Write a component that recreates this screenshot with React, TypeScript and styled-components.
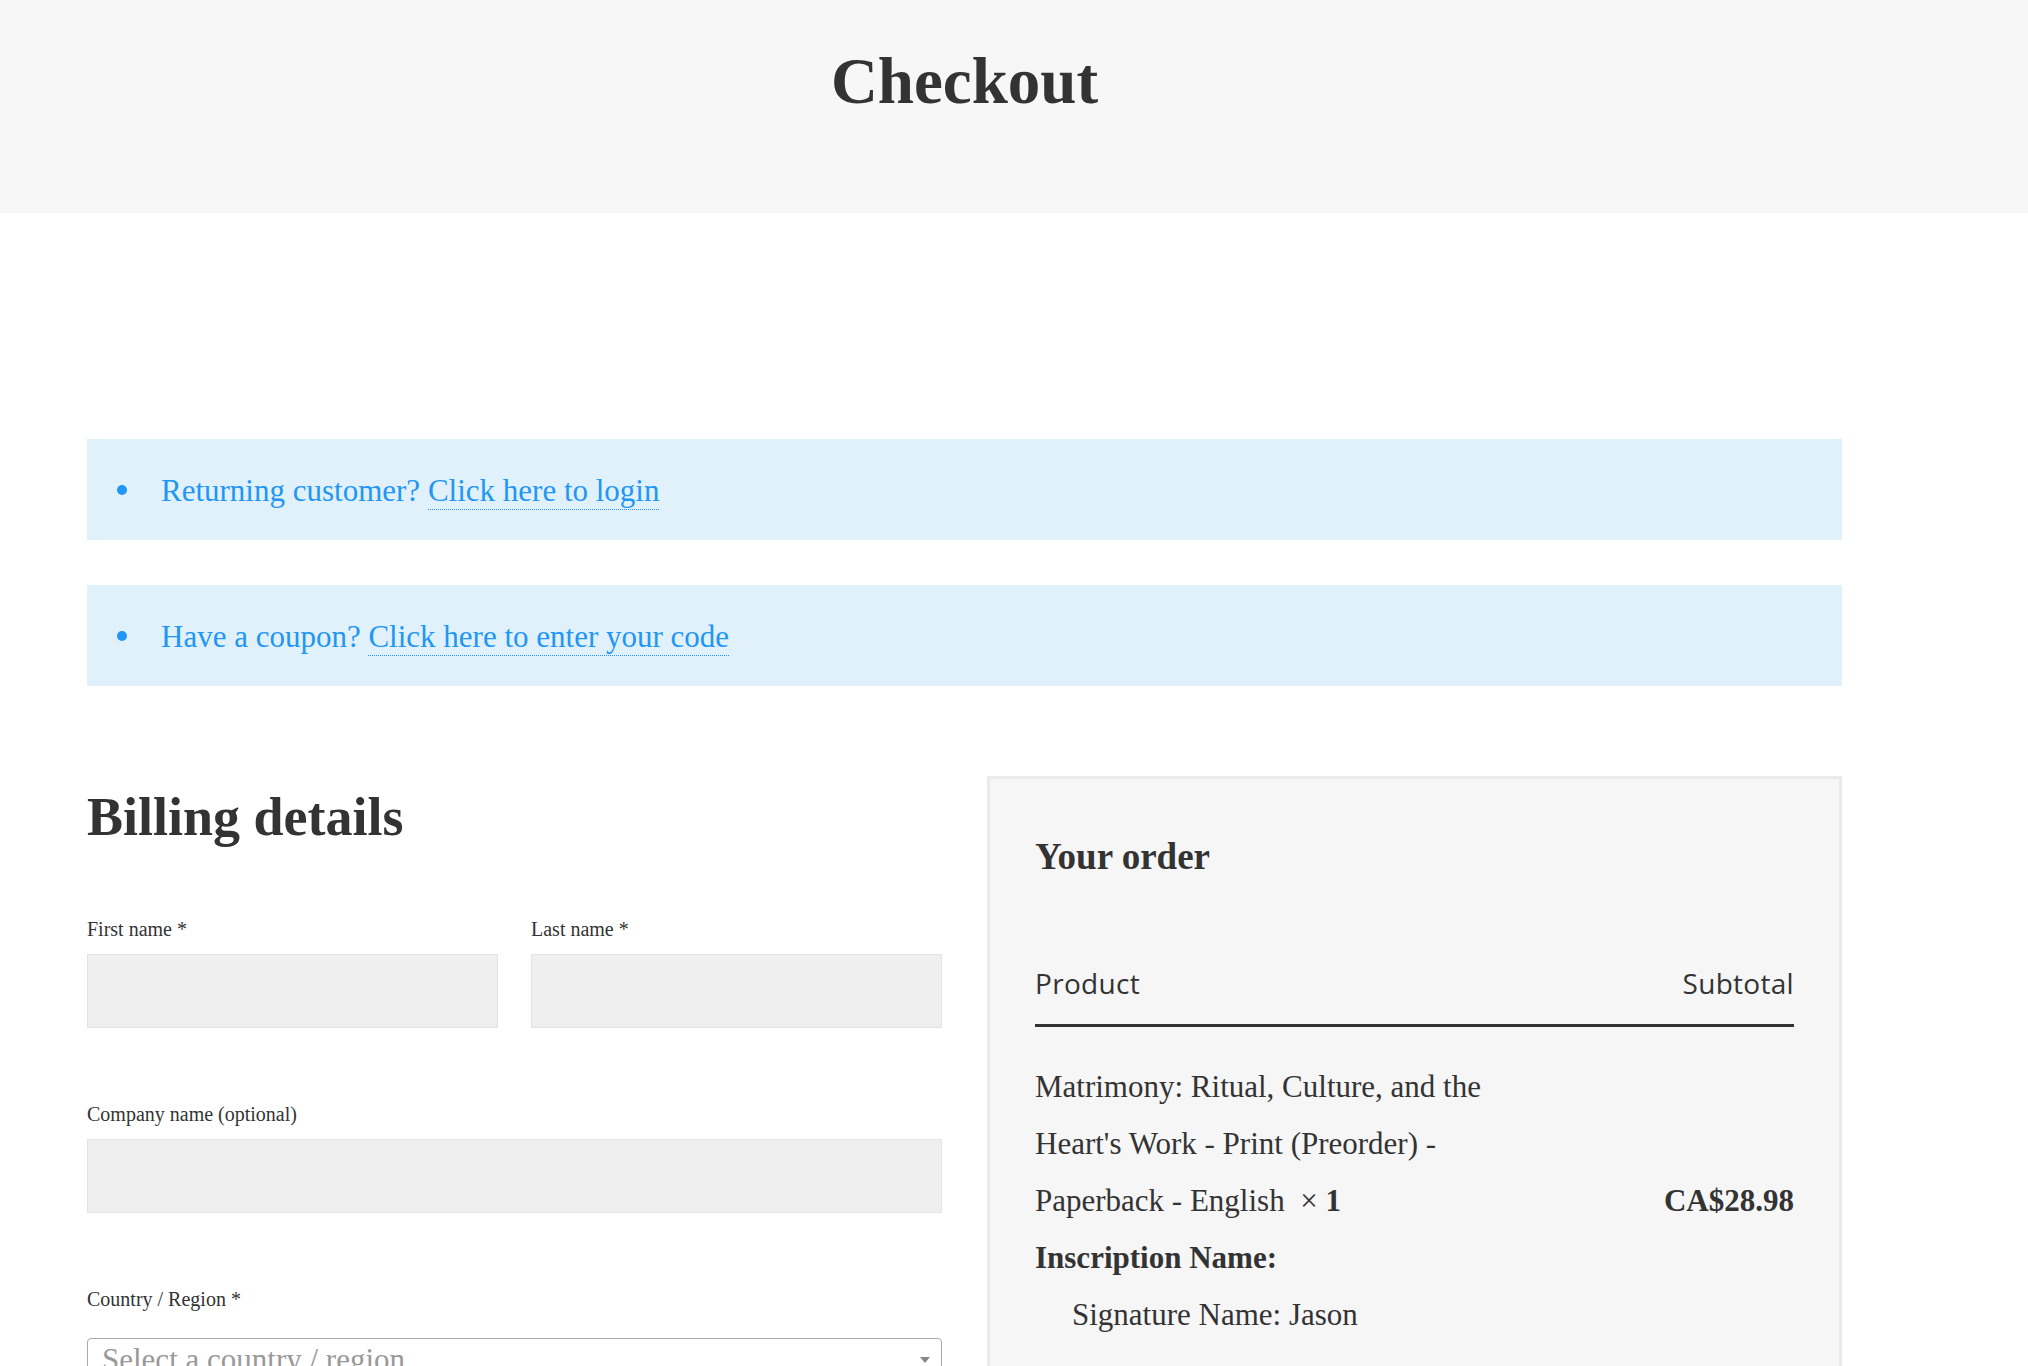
import React from 'react';
import styled, { createGlobalStyle } from 'styled-components';

const GlobalStyle = createGlobalStyle`
  * {
    box-sizing: border-box;
  }
  body {
    margin: 0;
    background: #fff;
    color: #333;
    font-family: "Liberation Serif", "Times New Roman", serif;
  }
`;

const PageHeader = styled.header`
  height: 213px;
  padding-top: 42px;
  background: #f7f7f7;
`;

const HeaderInner = styled.div`
  width: 1755px;
  margin-left: 87px;
  text-align: center;
`;

const PageTitle = styled.h1`
  margin: 0;
  font-size: 65px;
  line-height: 1.2;
  font-weight: 700;
  color: #333;
`;

const Main = styled.main`
  width: 1755px;
  margin-left: 87px;
  padding-top: 226px;
`;

const NoticeList = styled.div`
  display: flex;
  flex-direction: column;
  gap: 45px;
`;

const Notice = styled.div`
  display: flex;
  align-items: flex-start;
  height: 101px;
  padding: 29px 0 0 30px;
  background: #e1f1fc;
  color: #2196f3;
  font-size: 31px;
  line-height: 1.5;
`;

const Bullet = styled.span`
  flex-shrink: 0;
  width: 10px;
  height: 10px;
  margin: 17px 34px 0 0;
  border-radius: 50%;
  background: currentColor;
`;

const NoticeLink = styled.a`
  color: inherit;
  text-decoration: none;
  border-bottom: 1px dotted currentColor;
  padding-bottom: 1px;
`;

const Columns = styled.div`
  display: grid;
  grid-template-columns: 1fr 1fr;
  column-gap: 45px;
  align-items: start;
  margin-top: 90px;
`;

const BillingTitle = styled.h3`
  margin: 9px 0 0;
  font-size: 54px;
  line-height: 1.2;
  font-weight: 700;
`;

const FieldGrid = styled.div`
  display: grid;
  grid-template-columns: 1fr 1fr;
  column-gap: 33px;
  margin-top: 64px;
`;

const Field = styled.p<{ $wide?: boolean }>`
  margin: 0 0 71px;
  grid-column: ${({ $wide }) => ($wide ? '1 / -1' : 'auto')};
`;

const Label = styled.label<{ $gap?: number }>`
  display: block;
  margin-bottom: ${({ $gap }) => $gap ?? 10}px;
  font-size: 20px;
  line-height: 30px;
  color: #333;
`;

const TextInput = styled.input`
  display: block;
  width: 100%;
  height: 74px;
  margin: 0;
  padding: 0 16px;
  background: #efefef;
  border: 1px solid #e3e3e3;
  border-radius: 0;
  outline: none;
  font-family: inherit;
  font-size: 20px;
`;

const SelectBox = styled.div`
  display: flex;
  justify-content: space-between;
  align-items: flex-start;
  height: 74px;
  padding: 2px 11px 0 14px;
  background: #fff;
  border: 1px solid #aaa;
  border-radius: 4px;
`;

const Placeholder = styled.span`
  font-size: 31px;
  line-height: 1.2;
  color: #999;
`;

const Caret = styled.span`
  margin-top: 16px;
  width: 0;
  height: 0;
  border-left: 5px solid transparent;
  border-right: 5px solid transparent;
  border-top: 6px solid #888;
`;

const OrderBox = styled.section`
  padding: 56px 45px 60px;
  background: #f6f6f6;
  border: 3px solid #ebebeb;
`;

const OrderTitle = styled.h3`
  margin: 0;
  font-size: 37px;
  line-height: 1.2;
  font-weight: 700;
`;

const TableHead = styled.div`
  display: flex;
  justify-content: space-between;
  margin-top: 84px;
  padding-bottom: 20px;
  border-bottom: 3px solid #333;
  font-family: "Open Sans", "Liberation Sans", sans-serif;
  font-size: 28px;
  line-height: 40.5px;
  letter-spacing: 0.3px;
  color: #333;
`;

const ProductRow = styled.div`
  display: flex;
  justify-content: space-between;
  align-items: center;
  padding-top: 31px;
  font-size: 31px;
  line-height: 57px;
`;

const ProductName = styled.div`
  width: 500px;
`;

const Meta = styled.dl`
  margin: 0;
`;

const MetaKey = styled.dt`
  font-weight: 700;
`;

const MetaValue = styled.dd`
  margin: 0 0 0 37px;
`;

const Price = styled.strong`
  font-weight: 700;
`;

export default function App() {
  return (
    <>
      <GlobalStyle />
      <PageHeader>
        <HeaderInner>
          <PageTitle>Checkout</PageTitle>
        </HeaderInner>
      </PageHeader>
      <Main>
        <NoticeList>
          <Notice>
            <Bullet />
            <span>
              Returning customer? <NoticeLink href="#">Click here to login</NoticeLink>
            </span>
          </Notice>
          <Notice>
            <Bullet />
            <span>
              Have a coupon? <NoticeLink href="#">Click here to enter your code</NoticeLink>
            </span>
          </Notice>
        </NoticeList>

        <Columns>
          <div>
            <BillingTitle>Billing details</BillingTitle>
            <FieldGrid>
              <Field>
                <Label>First name *</Label>
                <TextInput type="text" />
              </Field>
              <Field>
                <Label>Last name *</Label>
                <TextInput type="text" />
              </Field>
              <Field $wide>
                <Label>Company name (optional)</Label>
                <TextInput type="text" />
              </Field>
              <Field $wide>
                <Label $gap={24}>Country / Region *</Label>
                <SelectBox>
                  <Placeholder>Select a country / region…</Placeholder>
                  <Caret />
                </SelectBox>
              </Field>
            </FieldGrid>
          </div>

          <OrderBox>
            <OrderTitle>Your order</OrderTitle>
            <TableHead>
              <span>Product</span>
              <span>Subtotal</span>
            </TableHead>
            <ProductRow>
              <ProductName>
                Matrimony: Ritual, Culture, and the Heart's Work - Print (Preorder) - Paperback - English&nbsp;
                {'\u00a0'}× <strong>1</strong>
                <Meta>
                  <MetaKey>Inscription Name:</MetaKey>
                  <MetaValue>Signature Name: Jason</MetaValue>
                </Meta>
              </ProductName>
              <Price>CA$28.98</Price>
            </ProductRow>
          </OrderBox>
        </Columns>
      </Main>
    </>
  );
}
